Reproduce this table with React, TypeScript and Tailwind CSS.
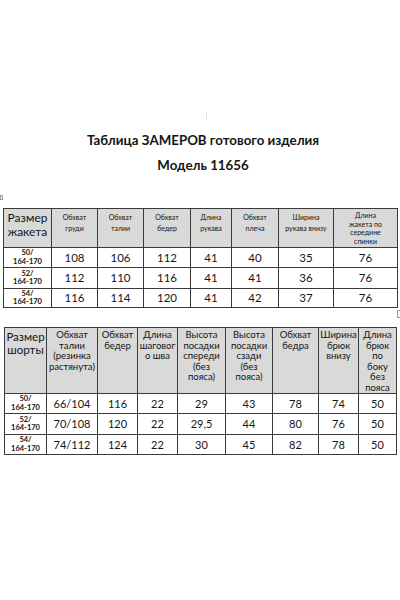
import React from "react";

const jacketHead = [
  ["Обхват", "груди"],
  ["Обхват", "талии"],
  ["Обхват", "бедер"],
  ["Длина", "рукава"],
  ["Обхват", "плеча"],
  ["Ширина", "рукава внизу"],
  ["Длина", "жакета по", "середине", "спинки"],
];
const jacketCols = [48, 46, 46, 47, 41, 47, 55, 64];
const jacketRows = [
  ["50/", ["108", "106", "112", "41", "40", "35", "76"], 20],
  ["52/", ["112", "110", "116", "41", "41", "36", "76"], 21],
  ["54/", ["116", "114", "120", "41", "42", "37", "76"], 19],
] as const;

const shortsHead = [
  ["Обхват", "талии", "(резинка", "растянута)"],
  ["Обхват", "бедер"],
  ["Длина", "шаговог", "о шва"],
  ["Высота", "посадки", "спереди", "(без", "пояса)"],
  ["Высота", "посадки", "сзади", "(без", "пояса)"],
  ["Обхват", "бедра"],
  ["Ширина", "брюк", "внизу"],
  ["Длина", "брюк", "по", "боку", "без", "пояса"],
];
const shortsCols = [42, 51, 40, 40, 48, 47, 46, 40, 38];
const shortsRows = [
  ["50/", ["66/104", "116", "22", "29", "43", "78", "74", "50"], 20],
  ["52/", ["70/108", "120", "22", "29,5", "44", "80", "76", "50"], 21],
  ["54/", ["74/112", "124", "22", "30", "45", "82", "78", "50"], 20],
] as const;

function Lines({ lines }: { lines: readonly string[] }) {
  return (
    <>
      {lines.map((l, i) => (
        <span key={i} className="block whitespace-nowrap">
          {l}
        </span>
      ))}
    </>
  );
}

function SizeCell({ size }: { size: string }) {
  return (
    <td className="border border-[#3a3a3a] p-0 text-center align-middle">
      <div className="text-[7.5px] font-bold leading-[8.5px]">
        {size}
        <br />
        164-170
      </div>
    </td>
  );
}

export default function App() {
  return (
    <div className="relative h-[600px] w-[400px] overflow-hidden bg-white font-['Lato',sans-serif] text-[#151515]">
      <div className="absolute left-0 top-[195px] h-[5px] w-[3px] border border-[#9a9a9a]" />
      <div className="absolute left-[397px] top-[310px] h-[8px] w-[6px] border border-[#9a9a9a]" />

      <div className="ml-[206px] mt-[112px] h-[8px] w-px bg-[#e4e4e4]" />

      <h1 className="mt-[12px] pl-[6px] text-center text-[13.3px] font-bold leading-[16px]">
        Таблица ЗАМЕРОВ готового изделия
      </h1>
      <p className="mt-[9px] pl-[6px] text-center text-[13.3px] font-bold leading-[16px]">Модель 11656</p>

      <table className="ml-[3px] mt-[35px] table-fixed border-collapse" style={{ width: 394 }}>
        <colgroup>
          {jacketCols.map((w, i) => (
            <col key={i} style={{ width: w }} />
          ))}
        </colgroup>
        <thead>
          <tr className="h-[39px] bg-[#d9d9d9]">
            <th className="border border-[#3a3a3a] p-0 pt-[2px] text-center align-top text-[12px] font-normal leading-[14px]">
              Размер
              <br />
              жакета
            </th>
            {jacketHead.map((h) => (
              <th
                key={h.join(" ")}
                className={`border border-[#3a3a3a] p-0 text-center align-top text-[7px] font-normal ${
                  h.length > 2 ? "pt-[2px] leading-[8.5px]" : "pt-[3px] leading-[11px]"
                }`}
              >
                <Lines lines={h} />
              </th>
            ))}
          </tr>
        </thead>
        <tbody>
          {jacketRows.map(([size, vals, h]) => (
            <tr key={size} style={{ height: h }}>
              <SizeCell size={size} />
              {vals.map((v, i) => (
                <td key={i} className="border border-[#3a3a3a] p-0 text-center align-middle text-[11.5px] leading-[12px]">
                  {v}
                </td>
              ))}
            </tr>
          ))}
        </tbody>
      </table>

      <table className="ml-[4px] mt-[19px] table-fixed border-collapse" style={{ width: 392 }}>
        <colgroup>
          {shortsCols.map((w, i) => (
            <col key={i} style={{ width: w }} />
          ))}
        </colgroup>
        <thead>
          <tr className="h-[66px] bg-[#d9d9d9]">
            <th className="border border-[#3a3a3a] p-0 pt-[2px] text-center align-top text-[11.5px] font-normal leading-[13px]">
              Размер
              <br />
              шорты
            </th>
            {shortsHead.map((h) => (
              <th
                key={h.join(" ")}
                className="border border-[#3a3a3a] p-0 pt-[2px] text-center align-top text-[9.5px] font-normal leading-[10.5px]"
              >
                <Lines lines={h} />
              </th>
            ))}
          </tr>
        </thead>
        <tbody>
          {shortsRows.map(([size, vals, h]) => (
            <tr key={size} style={{ height: h }}>
              <SizeCell size={size} />
              {vals.map((v, i) => (
                <td key={i} className="border border-[#3a3a3a] p-0 text-center align-middle text-[11px] leading-[12px]">
                  {v}
                </td>
              ))}
            </tr>
          ))}
        </tbody>
      </table>
    </div>
  );
}
